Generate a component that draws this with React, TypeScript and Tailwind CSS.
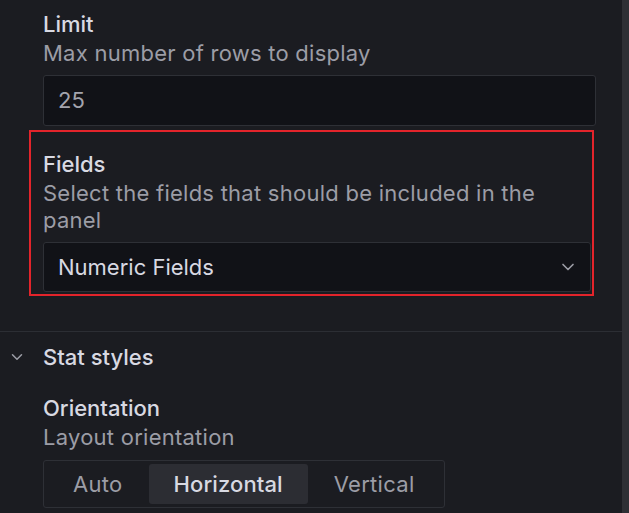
import React from 'react';
import { ChevronDown } from 'lucide-react';

const orientations = ['Auto', 'Horizontal', 'Vertical'];

const Label: React.FC<{ children: React.ReactNode }> = ({ children }) => (
  <div className="text-[22px] leading-[28px] font-medium text-[#d8d9e2] mb-[2px]">{children}</div>
);

const Description: React.FC<{ children: React.ReactNode }> = ({ children }) => (
  <div className="text-[22px] leading-[27px] tracking-[0.25px] text-[#9c9da6]">{children}</div>
);

const App: React.FC = () => {
  return (
    <div
      className="flex h-[513px] w-full overflow-hidden bg-[#1b1c21]"
      style={{ fontFamily: 'Inter, "Noto Sans", sans-serif' }}
    >
      <div className="flex-1 flex flex-col">
        <div className="pl-[43px] pr-[26px] pt-[10px]">
          <Label>Limit</Label>
          <Description>Max number of rows to display</Description>
          <div className="mt-[8px] h-[51px] flex items-center px-[14px] rounded-[3px] border border-[#2e3036] bg-[#111217] text-[22px] text-[#a3a4ad]">
            25
          </div>
        </div>

        <div className="mt-[4px] ml-[29px] w-[565px] border-2 border-[#e3242b] pt-[18px] pl-[12px] pr-[1px] pb-[2px]">
          <Label>Fields</Label>
          <Description>Select the fields that should be included in the panel</Description>
          <div className="mt-[8px] h-[50px] flex items-center justify-between pl-[14px] pr-[12px] rounded-[3px] border border-[#2e3036] bg-[#111217]">
            <span className="text-[22px] text-[#d8d9e2]">Numeric Fields</span>
            <ChevronDown size={20} className="text-[#9c9da6]" strokeWidth={2} />
          </div>
        </div>

        <div className="mt-[35px] border-t border-[#2c2e34] pt-[11px]">
          <div className="flex items-center">
            <div className="w-[43px] flex justify-center pr-[10px]">
              <ChevronDown size={18} className="text-[#9c9da6]" strokeWidth={2} />
            </div>
            <span className="text-[22px] leading-[28px] font-medium text-[#d8d9e2]">Stat styles</span>
          </div>

          <div className="pl-[43px] mt-[23px]">
            <Label>Orientation</Label>
            <Description>Layout orientation</Description>
            <div className="mt-[9px] inline-flex p-[3px] rounded-[3px] border border-[#2e3036]">
              {orientations.map((o) => (
                <div
                  key={o}
                  className={
                    o === 'Horizontal'
                      ? 'h-[40px] px-[25px] flex items-center rounded-[3px] bg-[#2c2d33] text-[22px] tracking-[0.1px] font-medium text-[#d8d9e2]'
                      : 'h-[40px] px-[26px] flex items-center text-[22px] tracking-[0.3px] text-[#9c9da6]'
                  }
                >
                  {o}
                </div>
              ))}
            </div>
          </div>
        </div>
      </div>
      <div className="w-[7px] bg-[#2e2f34]" />
    </div>
  );
};

export default App;
